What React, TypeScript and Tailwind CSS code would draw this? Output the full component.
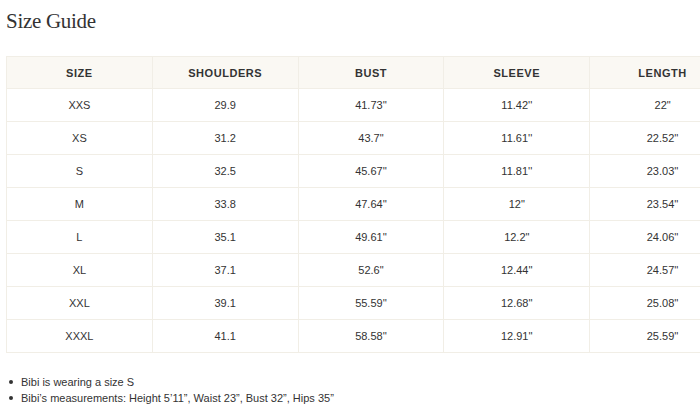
import React from "react";

const rows = [
  ["XXS", "29.9", "41.73''", "11.42''", "22\""],
  ["XS", "31.2", "43.7\"", "11.61''", "22.52''"],
  ["S", "32.5", "45.67''", "11.81''", "23.03''"],
  ["M", "33.8", "47.64''", "12\"", "23.54''"],
  ["L", "35.1", "49.61''", "12.2\"", "24.06''"],
  ["XL", "37.1", "52.6\"", "12.44''", "24.57''"],
  ["XXL", "39.1", "55.59''", "12.68''", "25.08''"],
  ["XXXL", "41.1", "58.58''", "12.91''", "25.59''"],
];

const headers = ["SIZE", "SHOULDERS", "BUST", "SLEEVE", "LENGTH"];

const notes = [
  "Bibi is wearing a size S",
  "Bibi’s measurements: Height 5’11”, Waist 23”, Bust 32”, Hips 35”",
];

export default function App() {
  return (
    <div className="w-[700px] h-[420px] overflow-hidden bg-white text-[#333]" style={{ fontFamily: '"Liberation Sans", Arial, sans-serif' }}>
      <div className="pl-[6px] pt-[7px]">
        <h1 className="text-[21px] leading-[28px] tracking-[-0.3px] text-[#333]" style={{ fontFamily: '"Liberation Serif", "Times New Roman", serif' }}>
          Size Guide
        </h1>
        <table className="mt-[21px] w-[730px] table-fixed border-collapse text-[11px]">
          <thead>
            <tr className="bg-[#faf8f3]">
              {headers.map((h) => (
                <th key={h} className="h-[32px] pt-[2px] border border-[#f1eee6] font-bold tracking-[0.05em] text-center align-middle text-[#333]">
                  {h}
                </th>
              ))}
            </tr>
          </thead>
          <tbody>
            {rows.map((r) => (
              <tr key={r[0]}>
                {r.map((c, i) => (
                  <td key={i} className="h-[33px] border border-[#f1eee6] text-center align-middle text-[#333]">
                    {c}
                  </td>
                ))}
              </tr>
            ))}
          </tbody>
        </table>
        <ul className="mt-[21px] text-[11px] leading-[16px] text-[#333]">
          {notes.map((n) => (
            <li key={n} className="flex items-center">
              <span className="ml-[3px] mr-[8px] h-[4px] w-[4px] rounded-full bg-[#333]" />
              <span>{n}</span>
            </li>
          ))}
        </ul>
      </div>
    </div>
  );
}
